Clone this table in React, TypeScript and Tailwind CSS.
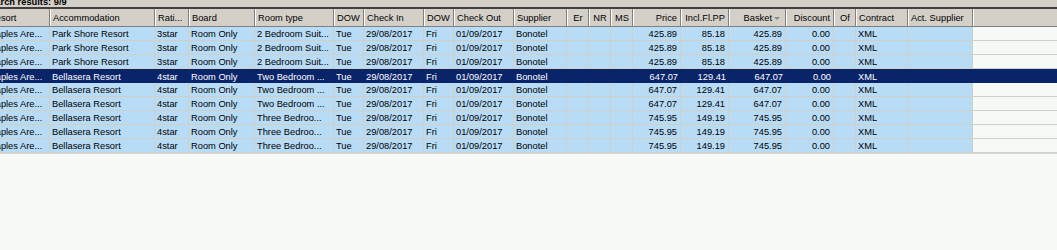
import React from "react";

type Col = { label: string; w: string; align: "l" | "r" | "c"; sort?: boolean; first?: boolean };

const cols: Col[] = [
  { label: "Resort", w: "w-[50px]", align: "l", first: true },
  { label: "Accommodation", w: "w-[105px]", align: "l" },
  { label: "Rati...", w: "w-[34px]", align: "l" },
  { label: "Board", w: "w-[66px]", align: "l" },
  { label: "Room type", w: "w-[79px]", align: "l" },
  { label: "DOW", w: "w-[30px]", align: "l" },
  { label: "Check In", w: "w-[60px]", align: "l" },
  { label: "DOW", w: "w-[30px]", align: "l" },
  { label: "Check Out", w: "w-[60px]", align: "l" },
  { label: "Supplier", w: "w-[53px]", align: "l" },
  { label: "Er", w: "w-[22px]", align: "c" },
  { label: "NR", w: "w-[22px]", align: "c" },
  { label: "MS", w: "w-[22px]", align: "c" },
  { label: "Price", w: "w-[48px]", align: "r" },
  { label: "Incl.Fl.PP", w: "w-[48px]", align: "r" },
  { label: "Basket", w: "w-[57px]", align: "r", sort: true },
  { label: "Discount", w: "w-[48px]", align: "r" },
  { label: "Of", w: "w-[22px]", align: "c" },
  { label: "Contract", w: "w-[52px]", align: "l" },
  { label: "Act. Supplier", w: "w-[65px]", align: "l" },
];

const mk = (room: string, price: string, pp: string) => [
  "Naples Are...",
  room.startsWith("2") ? "Park Shore Resort" : "Bellasera Resort",
  room.startsWith("2") ? "3star" : "4star",
  "Room Only",
  room,
  "Tue",
  "29/08/2017",
  "Fri",
  "01/09/2017",
  "Bonotel",
  "",
  "",
  "",
  price,
  pp,
  price,
  "0.00",
  "",
  "XML",
  "",
];

const rows = [
  mk("2 Bedroom Suit...", "425.89", "85.18"),
  mk("2 Bedroom Suit...", "425.89", "85.18"),
  mk("2 Bedroom Suit...", "425.89", "85.18"),
  mk("Two Bedroom ...", "647.07", "129.41"),
  mk("Two Bedroom ...", "647.07", "129.41"),
  mk("Two Bedroom ...", "647.07", "129.41"),
  mk("Three Bedroo...", "745.95", "149.19"),
  mk("Three Bedroo...", "745.95", "149.19"),
  mk("Three Bedroo...", "745.95", "149.19"),
];

const alignCls = (a: Col["align"]) =>
  a === "r" ? "justify-end pr-[3px]" : a === "c" ? "justify-center" : "justify-start pl-[2px]";

export default function App() {
  return (
    <div
      className="w-[1057px] h-[250px] overflow-hidden bg-[#f6faf7] text-[9.3px] text-black"
      style={{ fontFamily: '"Liberation Sans", Arial, sans-serif' }}
    >
      {/* title strip */}
      <div className="h-[7px] bg-[#d4d0c8] overflow-hidden">
        <div className="ml-[-16px] mt-[-4px] leading-[12px] font-bold whitespace-nowrap">Search results: 9/9</div>
      </div>
      <div className="h-[2px] bg-[#404040]" />
      {/* header */}
      <div className="flex h-[18px] bg-[#d4d0c8] border-b border-[#808080]">
        {cols.map((c, i) => (
          <div
            key={i}
            className={`${c.w} shrink-0 h-full flex items-center pt-[2px] overflow-hidden whitespace-nowrap border-r border-[#808080] ${
              i === 0 ? "" : "border-l border-l-white"
            } ${alignCls(c.align)}`}
          >
            {c.first ? (
              <span className="ml-[-13px]">{c.label}</span>
            ) : c.sort ? (
              <span className="flex items-center">
                {c.label}
                <svg width="8" height="5" viewBox="0 0 8 5" className="ml-[1px] mr-[1px]">
                  <polygon points="1,1 7,1 4,4" fill="#8a8a8a" />
                </svg>
              </span>
            ) : (
              c.label
            )}
          </div>
        ))}
        <div className="flex-1 border-l border-l-white" />
      </div>
      {/* rows */}
      {rows.map((r, ri) => {
        const sel = ri === 3;
        return (
          <div
            key={ri}
            className={`flex h-[14px] ${sel ? "bg-[#0a246a] text-white" : "border-b border-[#d0d0c8]"}`}
          >
            {cols.map((c, ci) => (
              <div
                key={ci}
                className={`${c.w} shrink-0 h-full flex items-center pt-[1px] overflow-hidden whitespace-nowrap leading-[12px] ${
                  sel ? "" : "bg-[#b9dcf6] border-r border-[#d0d0c8]"
                } ${alignCls(c.align)}`}
              >
                {c.first ? <span className="ml-[-13px]">{r[ci]}</span> : r[ci]}
              </div>
            ))}
            <div className={`flex-1 h-full ${sel ? "" : "bg-[#f6faf7]"}`} />
          </div>
        );
      })}
      <div className="h-px bg-[#d8dcd8]" />
    </div>
  );
}
